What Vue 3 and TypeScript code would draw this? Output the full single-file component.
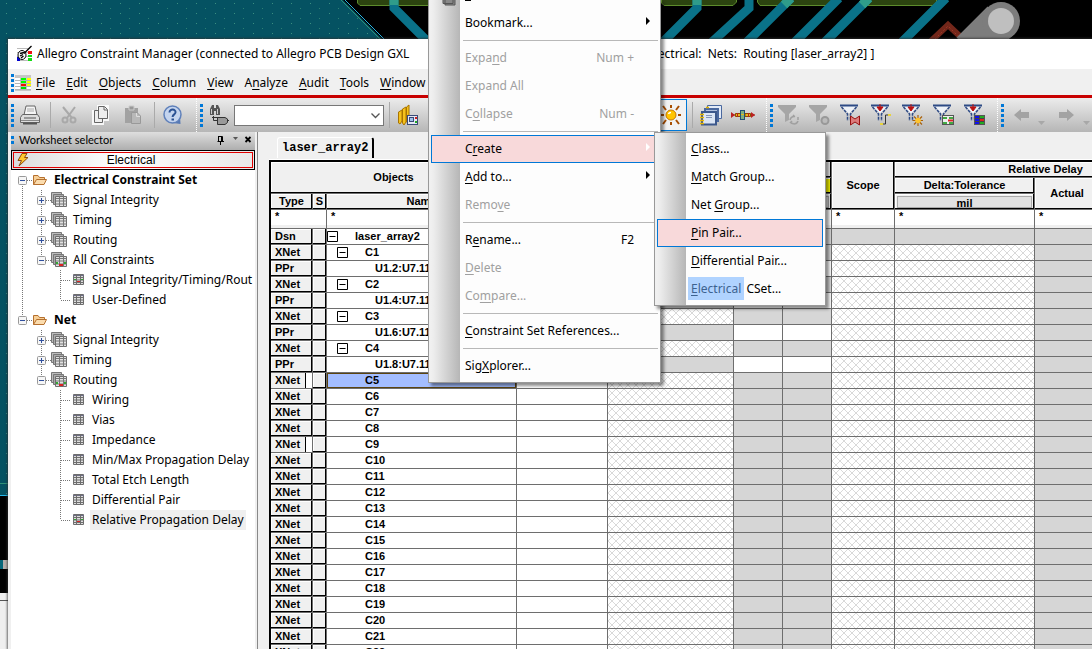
<script setup lang="ts">
type Guide = 'none' | 'line' | 'tee' | 'end'
interface TreeRow {
  label: string
  level: number
  guides: Guide[]
  toggle?: '+' | '-'
  marked?: boolean
  active?: boolean
}
interface MenuItem {
  parts?: [string, string, string]
  shortcut?: string
  arrow?: boolean
  disabled?: boolean
  hot?: boolean
  sep?: boolean
}
interface GridRow {
  type: string
  name: string
  depth: number
  open?: boolean
  narrow?: boolean
  selected?: boolean
}

const menus: [string, string, string][] = [
  ['', 'F', 'ile'],
  ['', 'E', 'dit'],
  ['', 'O', 'bjects'],
  ['', 'C', 'olumn'],
  ['', 'V', 'iew'],
  ['A', 'n', 'alyze'],
  ['', 'A', 'udit'],
  ['', 'T', 'ools'],
  ['', 'W', 'indow'],
]

const tree: TreeRow[] = [
  { label: 'Electrical Constraint Set', level: 0, guides: ['none'], toggle: '-' },
  { label: 'Signal Integrity', level: 1, guides: ['line', 'tee'], toggle: '+' },
  { label: 'Timing', level: 1, guides: ['line', 'tee'], toggle: '+' },
  { label: 'Routing', level: 1, guides: ['line', 'tee'], toggle: '+' },
  { label: 'All Constraints', level: 1, guides: ['line', 'end'], toggle: '-', marked: true },
  { label: 'Signal Integrity/Timing/Rout', level: 2, guides: ['line', 'none', 'tee'], marked: true },
  { label: 'User-Defined', level: 2, guides: ['line', 'none', 'end'] },
  { label: 'Net', level: 0, guides: ['end'], toggle: '-' },
  { label: 'Signal Integrity', level: 1, guides: ['none', 'tee'], toggle: '+' },
  { label: 'Timing', level: 1, guides: ['none', 'tee'], toggle: '+' },
  { label: 'Routing', level: 1, guides: ['none', 'end'], toggle: '-', marked: true },
  { label: 'Wiring', level: 2, guides: ['none', 'none', 'tee'] },
  { label: 'Vias', level: 2, guides: ['none', 'none', 'tee'] },
  { label: 'Impedance', level: 2, guides: ['none', 'none', 'tee'] },
  { label: 'Min/Max Propagation Delay', level: 2, guides: ['none', 'none', 'tee'] },
  { label: 'Total Etch Length', level: 2, guides: ['none', 'none', 'tee'] },
  { label: 'Differential Pair', level: 2, guides: ['none', 'none', 'tee'] },
  { label: 'Relative Propagation Delay', level: 2, guides: ['none', 'none', 'end'], marked: true, active: true },
]

function guidePath(row: TreeRow, index: number): string {
  const g = row.guides[index]
  const last = index === row.guides.length - 1
  let d = ''
  if (g === 'line' || g === 'tee') d += 'M9.5 0V20'
  if (g === 'end') d += 'M9.5 0V10'
  if (last && row.level === 0 && row.label !== 'Net') d += 'M9.5 10V20'
  if (last) d += 'M10 10.5H19'
  return d
}

const contextMenu: MenuItem[] = [
  { parts: ['', '', 'Bookmark...'], arrow: true },
  { sep: true },
  { parts: ['Expa', 'n', 'd'], shortcut: 'Num +', disabled: true },
  { parts: ['', '', 'Expand All'], disabled: true },
  { parts: ['C', 'o', 'llapse'], shortcut: 'Num -', disabled: true },
  { sep: true },
  { parts: ['C', 'r', 'eate'], arrow: true, hot: true },
  { parts: ['', 'A', 'dd to...'], arrow: true },
  { parts: ['Remo', 'v', 'e'], disabled: true },
  { sep: true },
  { parts: ['R', 'e', 'name...'], shortcut: 'F2' },
  { parts: ['', 'D', 'elete'], disabled: true },
  { parts: ['Co', 'm', 'pare...'], disabled: true },
  { sep: true },
  { parts: ['', 'C', 'onstraint Set References...'] },
  { sep: true },
  { parts: ['Sig', 'X', 'plorer...'] },
]

const rows: GridRow[] = [{ type: 'Dsn', name: 'laser_array2', depth: 0, open: true }]
for (let i = 1; i <= 4; i++) {
  rows.push({ type: 'XNet', name: `C${i}`, depth: 1, open: true })
  rows.push({ type: 'PPr', name: `U1.${i * 2}:U7.11`, depth: 2 })
}
for (let i = 5; i <= 22; i++) {
  rows.push({ type: 'XNet', name: `C${i}`, depth: 1, narrow: i === 5 || i === 9, selected: i === 5 })
}

function fills(row: GridRow): string[] {
  if (row.type === 'Dsn') return ['', 'gray', 'gray', 'gray', 'gray', 'gray', 'gray', 'gray']
  if (row.type === 'PPr') return ['', 'gray', '', '', 'hatch', 'hatch', 'gray', 'gray']
  return ['', 'hatch', 'gray', 'gray', 'hatch', 'hatch', 'gray', 'gray']
}

const filters = ['refresh', 'cancel', 'bow', 'step', 'spark', 'table', 'list']
</script>

<template>
  <div class="desktop">
    <svg class="board" viewBox="0 0 1092 649" width="1092" height="649" aria-hidden="true">
      <defs>
        <pattern id="dots" width="19" height="10" patternUnits="userSpaceOnUse">
          <rect x="6" y="3" width="1" height="1" fill="#3a8f80" />
          <rect x="15" y="8" width="1" height="1" fill="#2d8074" />
        </pattern>
      </defs>
      <rect width="1092" height="649" fill="#000" />
      <path d="M0 0H343L382 39V495H0Z" fill="#055262" />
      <path d="M0 0H343L382 39V495H0Z" fill="url(#dots)" />
      <path d="M341 0L380 39" stroke="#2f9078" fill="none" />
      <path d="M345 0L384 39M0 495.500H8" stroke="#25b5e8" fill="none" />
      <path d="M0 483.500H8" stroke="#2f9078" />
      <g fill="#2c4410" stroke="#5d8c2c">
        <path d="M357.500 -2V3L360 5.500H440V-2Z" />
        <path d="M661.500 -2V3L664 5.500H733L736.500 2V-2Z" />
        <path d="M757.500 -2V2L760 5.500H829L832.500 2V-2Z" />
        <path d="M861.500 -2V2L864 5.500H933L936.500 2V-2Z" />
      </g>
      <g fill="none" stroke="#0a7289" stroke-width="9">
        <path d="M394 -2V8L428 42" />
        <path d="M697 -2V8L663 42M749 -2V8L712 42M791 -2L747 42M839 -2L795 42M869 -2L825 42M946 -2L902 42" />
      </g>
      <g fill="none" stroke="#2f9c8a" stroke-width="9">
        <path d="M394 -2V5M697 -2V5M791 -2L784 5M869 -2L862 5" />
      </g>
      <path d="M930 42L948 25L966 42" fill="none" stroke="#73271a" stroke-width="6" />
      <path d="M932 42L948 26L964 42" fill="none" stroke="#a03526" stroke-dasharray="2 2" />
      <path d="M1001 20L970 51" stroke="#7d7d7d" stroke-width="38" />
      <circle cx="1001" cy="21" r="19" fill="#7d7d7d" />
      <circle cx="1001" cy="21" r="13" fill="#bfbfbf" />
      <rect y="560" width="3" height="9" fill="#08677a" />
      <rect x="3" y="560" width="5" height="9" fill="#b5aeab" />
      <rect y="593" width="8" height="56" fill="#efefef" />
      <path d="M0 600.500H8" stroke="#555" />
    </svg>

    <main class="window">
      <header class="titlebar">
        <svg width="18" height="18" viewBox="0 0 18 18" aria-hidden="true">
          <path d="M1 3.500H12M1 7.500H12M1 11.500H12M1 15.500H16" stroke="#bbb" />
          <path d="M12 6h4v3h-4z" fill="#e11" /><path d="M12 10h4v2h-4zM12 13h4v3h-4z" fill="#1d1" />
          <path d="M1 12h3v4h-3z" fill="#00c" />
          <ellipse cx="6" cy="10" rx="4" ry="4.500" fill="#fff" stroke="#000" />
          <path d="M15.500 1L8 8.500M4 8.500L8 7.500M4 11L7 9.500M5 13L7.500 11" stroke="#000" stroke-width="1.300" fill="none" />
        </svg>
        <span class="title-main">Allegro Constraint Manager (connected to Allegro PCB Design GXL</span>
        <span class="title-doc">Electrical:&nbsp; Nets:&nbsp; Routing [laser_array2] ]</span>
      </header>

      <nav class="menubar" aria-label="Main menu">
        <span class="grip small"></span>
        <svg class="sheet-icon" width="16" height="16" viewBox="0 0 16 16" aria-hidden="true">
          <rect width="16" height="16" fill="#c6c6c6" />
          <path d="M0 3h5v12H0z" fill="#fff" />
          <path d="M6 3h5v6H6z" fill="#0f0" /><path d="M12 3h4v9h-4z" fill="#ff0" />
          <path d="M6 9h5v3H6z" fill="#e10" /><path d="M6 12h5v3H6z" fill="#0d0" /><path d="M12 12h4v3h-4z" fill="#fff" />
          <path d="M0 5.500H16M0 8.500H16M0 11.500H16M0 14.500H16" stroke="#b5b5b5" />
        </svg>
        <button v-for="m in menus" :key="m[1] + m[2]" type="button">{{ m[0] }}<u>{{ m[1] }}</u>{{ m[2] }}</button>
      </nav>

      <div class="toolbar" role="toolbar" aria-label="Tools">
        <span class="grip"></span>
        <button class="tool" type="button" aria-label="Print">
          <svg width="22" height="22" viewBox="0 0 22 22">
            <path d="M5 11L7 2H16L18 11Z" fill="#f5f5f5" stroke="#666" />
            <path d="M8 5H15M8 7H15" stroke="#aaa" />
            <path d="M3.500 10.500H18.500L20.500 13.500V18.500H1.500V13.500Z" fill="#ddd" stroke="#666" />
            <path d="M2 16.500H20" stroke="#888" /><path d="M4 19.500H18" stroke="#555" stroke-width="2" />
            <path d="M5 14H17" stroke="#999" stroke-width="2" />
          </svg>
        </button>
        <span class="sep"></span>
        <button class="tool wide" type="button" aria-label="Cut">
          <svg width="18" height="20" viewBox="0 0 18 20" fill="none" stroke="#a9a9a9">
            <path d="M3 2L12 13M15 2L7 13" stroke-width="2" /><circle cx="5" cy="15" r="2.500" stroke-width="2" /><circle cx="13" cy="15" r="2.500" stroke-width="2" />
          </svg>
        </button>
        <button class="tool wide" type="button" aria-label="Copy">
          <svg width="18" height="20" viewBox="0 0 18 20">
            <path d="M0 5H5V0H17V16H12V20H0Z" fill="#fff" opacity=".85" />
            <path d="M2.500 5.500H10.500V17.500H2.500Z" fill="#eee" stroke="#666" />
            <path d="M6.500 1.500H12.500L15.500 4.500V13.500H6.500Z" fill="#eee" stroke="#666" /><path d="M12 2V5H15" stroke="#666" fill="none" />
          </svg>
        </button>
        <button class="tool wide" type="button" aria-label="Paste">
          <svg width="18" height="20" viewBox="0 0 18 20">
            <path d="M1 3H14V18H1Z" fill="#a2a2a2" /><path d="M5 1H10V5H5Z" fill="#999" stroke="#ccc" />
            <path d="M7.500 7.500H13L16.500 11V18.500H7.500Z" fill="#b8b8b8" stroke="#999" /><path d="M12.500 8V11.500H16" stroke="#ddd" fill="none" />
          </svg>
        </button>
        <span class="sep"></span>
        <button class="tool wide" type="button" aria-label="Help">
          <svg width="20" height="20" viewBox="0 0 20 20">
            <path d="M17 11L17.500 19L10 18Z" fill="#5679b4" />
            <circle cx="9.500" cy="9.500" r="8.500" fill="#c4d4ee" stroke="#5f80ba" stroke-width="1.500" />
            <path d="M6.500 7.500C6.500 3.500 13 3.800 12.500 7.500C12.300 9.500 9.600 9.300 9.600 12" fill="none" stroke="#2b5294" stroke-width="2" />
            <path d="M8.500 13.500H11V15.500H8.500Z" fill="#2b5294" />
          </svg>
        </button>
        <span class="end"></span>
        <span class="grip"></span>
        <button class="tool" type="button" aria-label="Find">
          <svg width="20" height="22" viewBox="0 0 20 22">
            <path d="M1 11V5L3 1H5V4H7V1H9L11 5V11H7V7H5V11Z" fill="#555" /><path d="M2.500 5V10M8.500 5V10" stroke="#ccc" />
            <path d="M4.500 12V16.500H8M3 13.500H9M18 16.500H20" stroke="#333" fill="none" />
            <path d="M8.500 13.500H16L18.500 15V18.500L16 20.500H8.500Z" fill="#999" stroke="#333" />
          </svg>
        </button>
        <span class="combo">
          <select aria-label="Find object"><option></option></select>
          <svg width="9" height="6" viewBox="0 0 9 6" aria-hidden="true"><path d="M.5 .5L4.500 4.500L8.500 .5" fill="none" stroke="#555" stroke-width="1.300" /></svg>
        </span>
        <span class="sep"></span>
        <button class="tool wide" type="button" aria-label="Properties">
          <svg width="22" height="22" viewBox="0 0 22 22">
            <path d="M1.500 19V8L5 6V17L3 20ZM5.500 19V5L9 3V18L7 21ZM9.500 18V3L12 1V17Z" fill="#f6c21c" stroke="#a87400" />
            <rect x="10.500" y="11.500" width="10" height="9" fill="#e5e9f5" stroke="#3b4a78" /><rect x="12.500" y="13.500" width="4" height="4" fill="#9fc0e8" stroke="#3b4a78" />
            <path d="M18 13h2v2h-2z" fill="#c22" /><path d="M18 17h2v2h-2z" fill="#2a2" />
          </svg>
        </button>
        <span class="covered"></span>
        <button class="tool wide pressed" type="button" aria-label="Highlight">
          <svg width="24" height="24" viewBox="0 0 24 24">
            <path d="M12 2V5M12 19V22M2 12H5M19 12H22M4 3L7 7M20 3L17 7M4 21L7 17M20 21L17 17" stroke="#a84e00" stroke-width="2" />
            <circle cx="12" cy="12" r="5" fill="#ffc400" stroke="#c87800" /><path d="M9.500 11Q10 9.500 12 9.500" stroke="#fff" fill="none" stroke-width="1.500" />
          </svg>
        </button>
        <span class="sep"></span>
        <button class="tool wide" type="button" aria-label="Worksheets">
          <svg width="22" height="22" viewBox="0 0 22 22">
            <path d="M7.500 1.500H21.500V14.500H7.500Z" fill="#e3ebf8" stroke="#4a689e" /><path d="M15 4.500H19M15 6.500H19" stroke="#89a" />
            <path d="M5 5H18V17H5Z" fill="#aebfdd" stroke="#4a689e" stroke-width="2" />
            <path d="M2 8H16V20.500H2Z" fill="#dbe5f4" stroke="#3c588c" stroke-width="2" /><path d="M6 11.500H12M6 13.500H12" stroke="#8394b5" />
            <path d="M0 10.500H4M0 13.500H4M0 16.500H4M0 19.500H4M6 3.500H9" stroke="#e5b400" stroke-width="1.500" />
          </svg>
        </button>
        <button class="tool wide" type="button" aria-label="Net topology">
          <svg width="24" height="12" viewBox="0 0 24 12">
            <path d="M0 6H24" stroke="#a32414" stroke-width="1" /><path d="M0 3L4 6L0 9ZM20 3L24 6L20 9Z" fill="#b22" />
            <path d="M4.500 4.500H10V7.500H4.500ZM14 4.500H19.500V7.500H14Z" fill="#e4b71d" stroke="#8c4b00" /><path d="M6.500 4V8M17.500 4V8" stroke="#b22" />
            <rect x="9.500" y="1.500" width="4" height="9" fill="#7fb07f" stroke="#234f73" /><path d="M10 5.500H13" stroke="#e4b71d" />
          </svg>
        </button>
        <span class="end"></span>
        <span class="grip"></span>
        <button v-for="f in filters" :key="f" class="tool" type="button" :aria-label="'Filter ' + f">
          <svg width="22" height="22" viewBox="1 0 22 22">
            <path v-if="f === 'refresh' || f === 'cancel'" d="M1 1H19V3L12 10V16L8 18V10L1 3Z" fill="#a6a6a6" />
            <template v-else>
              <path d="M3 2H17L11 9H9Z" fill="#eef2f8" />
              <path d="M1 1.500H19" stroke="#2d4a85" stroke-width="2" />
              <path d="M2.500 3L8.500 10V17M17.500 3L11.500 10V17" fill="none" stroke="#2d4a85" stroke-width="1.500" stroke-dasharray="3 1" />
            </template>
            <path v-if="f === 'refresh'" d="M13 16Q14 12 18 12.500M21 13V16M14 19L17 20M21 17Q20 20 17 20M16 11L18 13M15 17L13 19" fill="none" stroke="#a0a0a0" stroke-width="1.500" />
            <circle v-if="f === 'cancel'" cx="17" cy="16.500" r="3.500" fill="#bbb" stroke="#999" stroke-width="2" />
            <path v-if="f === 'bow'" d="M11.500 12L16 15L20.500 12V21L16 18L11.500 21Z" fill="#dd7c7c" stroke="#911" />
            <path v-if="f === 'step' || f === 'spark' || f === 'list'" d="M10 0V6M7 3H13L10 7Z" fill="#b11" stroke="#b11" />
            <g v-if="f === 'step'"><path d="M11 20H15.500V11H20" fill="none" stroke="#333" /><path d="M10 19h3v2h-3zM18 10h3v2h-3z" fill="#e8d33c" /></g>
            <g v-if="f === 'spark'"><path d="M17 11V22M11.500 16.500H22M13 12.500L21 20.500M21 12.500L13 20.500" stroke="#a8600c" stroke-width="1.200" /><circle cx="17" cy="16.500" r="2.800" fill="#ffc52e" /></g>
            <g v-if="f === 'table'">
              <rect x="10.500" y="11.500" width="11" height="9" fill="#eee" stroke="#555" />
              <path d="M11 14H15M11 19H15M17 14H21M17 19H21" stroke="#4a4" stroke-width="2" /><path d="M16 16.500H21" stroke="#d22" stroke-width="2" />
            </g>
            <g v-if="f === 'list'">
              <rect x="11.500" y="11.500" width="10" height="9" fill="#444" stroke="#555" />
              <path d="M12 13H16M12 16H16M12 19H16" stroke="#11e" stroke-width="2" /><path d="M17 13H21M17 19H21" stroke="#2a2" stroke-width="2" /><path d="M17 16H21" stroke="#d22" stroke-width="2" />
            </g>
          </svg>
        </button>
        <span class="end"></span>
        <span class="grip"></span>
        <button class="tool nav" type="button" aria-label="Back" disabled>
          <svg width="32" height="20" viewBox="0 0 32 20"><path d="M0 10L7 4V7H15V13H7V16Z" fill="#a3a3a3" /><path d="M24 16H31L27.500 20Z" fill="#a8a8a8" /></svg>
        </button>
        <button class="tool nav" type="button" aria-label="Forward" disabled>
          <svg width="32" height="20" viewBox="0 0 32 20"><path d="M15 10L8 4V7H0V13H8V16Z" fill="#a3a3a3" /><path d="M24 16H31L27.500 20Z" fill="#a8a8a8" /></svg>
        </button>
      </div>

      <div class="body">
        <aside class="side">
          <header class="side-head">
            <span class="mini-grip"></span>
            <h2>Worksheet selector</h2>
            <svg width="38" height="10" viewBox="0 0 38 10" aria-hidden="true">
              <path d="M.500 6.500H7M1.500 1.500H5.500V6M1.500 1V6M4.500 1V6M3.500 7V10" stroke="#000" fill="none" />
              <path d="M16 2H21L18.500 5Z" fill="#555" /><path d="M28.500 2L33.500 7M33.500 2L28.500 7" stroke="#000" stroke-width="1.800" />
            </svg>
          </header>
          <button class="electrical" type="button">
            <svg width="12" height="14" viewBox="0 0 12 14" aria-hidden="true"><path d="M5 .5H10L7.500 4.500H11L2 13L4.500 7.500H1Z" fill="#ffc62e" stroke="#8c4a10" /></svg>
            <span>Electrical</span>
          </button>
          <ul class="tree">
            <li v-for="(row, i) in tree" :key="i" :class="'level' + row.level">
              <span v-for="(g, k) in row.guides" :key="k" class="guide">
                <svg width="19" height="20" viewBox="0 0 19 20" aria-hidden="true">
                  <path :d="guidePath(row, k)" stroke="#777" stroke-dasharray="1 1" fill="none" />
                  <template v-if="row.toggle && k === row.guides.length - 1">
                    <rect x="5.500" y="6.500" width="8" height="8" rx="1" fill="#f6f6f6" stroke="#999" />
                    <path d="M7 10.500H12" stroke="#2f4f9d" />
                    <path v-if="row.toggle === '+'" d="M9.500 8V13" stroke="#2f4f9d" />
                  </template>
                </svg>
              </span>
              <svg v-if="row.level === 0" class="ico" width="17" height="14" viewBox="0 0 17 14" aria-hidden="true">
                <path d="M1.500 11.500V2.500H6L7.500 4.500H12.500V6" fill="#f7cf96" stroke="#b5702e" />
                <path d="M1.500 11.500L4.500 6.500H14.500L12 11.500Z" fill="#fbdcae" stroke="#b5702e" />
              </svg>
              <svg v-else-if="row.level === 1" class="ico" width="17" height="16" viewBox="0 0 17 16" aria-hidden="true">
                <path d="M.5 .5h10v10h-10z" fill="#bbb" stroke="#777" /><path d="M2.500 2.500h10v10h-10z" fill="#aaa" stroke="#777" />
                <path d="M4.500 4.500h11v10h-11z" fill="#e2e2e2" stroke="#6e6e6e" />
                <path d="M5 6.500H16M5 9H16M5 12H16M8.500 4V15M12.500 4V15" stroke="#777" />
                <path v-if="row.marked" d="M8 12h4v2H8z" fill="#d22" /><path v-if="row.marked" d="M5 10h2v2H5zM13 10h2v2h-2z" fill="#3a3" />
              </svg>
              <svg v-else class="ico leaf" width="11" height="12" viewBox="0 0 11 12" aria-hidden="true">
                <path d="M.5 .5h10v10H.5z" fill="#ddd" stroke="#6e6e6e" />
                <path d="M0 1.500H11" stroke="#6e6e86" /><path d="M0 3.500H11M0 6H11M0 8.500H11M3.500 0V11M7.500 0V11" stroke="#6e6e6e" />
                <path v-if="row.marked" d="M4 7h3v1H4z" fill="#d22" /><path v-if="row.marked" d="M1 5h2v1H1zM8 5h2v1H8z" fill="#3a3" />
              </svg>
              <a href="#" :class="{ active: row.active }">{{ row.label }}</a>
            </li>
          </ul>
        </aside>

        <section class="sheet">
          <div class="tabs"><button type="button" class="tab">laser_array2</button></div>
          <div class="frame">
            <table>
              <colgroup>
                <col class="c-type" /><col class="c-s" /><col class="c-name" /><col class="c-ref" /><col class="c-pair" />
                <col class="c-pin" /><col class="c-pin" /><col class="c-scope" /><col class="c-delta" /><col class="c-actual" /><col class="c-margin" />
              </colgroup>
              <thead>
                <tr>
                  <th colspan="3" rowspan="2">Objects</th>
                  <th rowspan="3"></th><th rowspan="3"></th>
                  <th colspan="2"></th>
                  <th rowspan="3">Scope</th>
                  <th colspan="3">Relative Delay</th>
                </tr>
                <tr>
                  <th colspan="2" class="yellow"></th>
                  <th>Delta:Tolerance</th>
                  <th rowspan="2">Actual</th><th rowspan="2"></th>
                </tr>
                <tr>
                  <th>Type</th><th>S</th><th>Name</th>
                  <th colspan="2"><span class="unit"></span></th>
                  <th><span class="unit">mil</span></th>
                </tr>
                <tr class="filter">
                  <td colspan="2">*</td><td>*</td>
                  <td></td><td></td><td></td><td></td>
                  <td>*</td><td>*</td><td>*</td><td></td>
                </tr>
              </thead>
              <tbody>
                <tr v-for="row in rows" :key="row.name">
                  <td class="head type" :class="{ narrow: row.narrow }"><span>{{ row.type }}</span></td>
                  <td class="head"></td>
                  <td :class="['name', 'depth' + row.depth, { selected: row.selected }]">
                    <div>
                      <span class="box"><svg v-if="row.open" width="11" height="11" viewBox="0 0 11 11"><path d="M.5 .5h10v10H.5zM2.500 5.500h6" fill="none" stroke="#000" /></svg></span>
                      <span>{{ row.name }}</span>
                    </div>
                  </td>
                  <td v-for="(f, n) in fills(row)" :key="n" :class="f"></td>
                </tr>
              </tbody>
            </table>
          </div>
        </section>
      </div>
    </main>

    <div class="popup context" role="menu">
      <div class="partial">
        <svg width="50" height="8" viewBox="0 0 50 8" aria-hidden="true">
          <path d="M12 0V3.500H22V0M14 0V5H24V0" fill="#888" stroke="#555" /><path d="M34 .5H40" stroke="#000" />
        </svg>
      </div>
      <template v-for="(item, i) in contextMenu" :key="i">
        <hr v-if="item.sep" />
        <button v-else type="button" role="menuitem" :disabled="item.disabled" :class="{ hot: item.hot }">
          <span v-if="item.parts">{{ item.parts[0] }}<u>{{ item.parts[1] }}</u>{{ item.parts[2] }}</span>
          <span v-if="item.shortcut" class="shortcut">{{ item.shortcut }}</span>
          <svg v-if="item.arrow" class="arrow" width="4" height="8" viewBox="0 0 4 8"><path d="M0 0L4 4L0 8Z" fill="currentColor" /></svg>
        </button>
      </template>
    </div>

    <div class="popup submenu" role="menu">
      <button type="button" role="menuitem"><span><u>C</u>lass...</span></button>
      <button type="button" role="menuitem"><span><u>M</u>atch Group...</span></button>
      <button type="button" role="menuitem"><span>Net <u>G</u>roup...</span></button>
      <button type="button" role="menuitem" class="hot"><span><u>P</u>in Pair...</span></button>
      <button type="button" role="menuitem"><span><u>D</u>ifferential Pair...</span></button>
      <button type="button" role="menuitem"><span><mark><u>E</u>lectrical</mark> CSet...</span></button>
    </div>
  </div>
</template>

<style>
html,
body {
  margin: 0;
  overflow: hidden;
}
</style>

<style scoped>
.desktop {
  position: relative;
  box-sizing: border-box;
  height: 100vh;
  padding: 39px 0 0 8px;
  overflow: hidden;
  background: #000;
  color: #000;
  font: 12px/20px "Noto Sans", "Open Sans", sans-serif;
}
.board {
  position: absolute;
  top: 0;
  left: 0;
}
button,
select {
  margin: 0;
  padding: 0;
  border: 0;
  background: none;
  color: inherit;
  font: inherit;
}
u {
  text-underline-offset: 2px;
}
.window {
  position: relative;
  display: flex;
  flex-direction: column;
  height: 100%;
  background: #f0f0f0;
  box-shadow: 0 0 2px 1px rgba(50, 50, 50, 0.7);
}
.titlebar {
  display: flex;
  flex: none;
  align-items: center;
  height: 30px;
  padding-left: 8px;
  background: #fff;
  white-space: pre;
}
.titlebar svg {
  margin-right: 3px;
}
.title-main {
  flex: 0 0 611px;
}
.menubar {
  display: flex;
  flex: none;
  align-items: center;
  gap: 11px;
  box-sizing: border-box;
  height: 29px;
  padding-top: 2px;
  border-bottom: 3px solid #c80000;
}
.grip {
  flex: none;
  width: 3px;
  height: 23px;
  margin-left: 3px;
  background: repeating-linear-gradient(#0078d7 0 3px, transparent 3px 5px);
}
.grip.small {
  height: 18px;
  margin-right: -10px;
}
.sheet-icon {
  margin-right: -6px;
}
.toolbar {
  display: flex;
  flex: none;
  align-items: center;
  height: 34px;
  background: linear-gradient(#ececec, #b6b6b6);
}
.tool {
  display: flex;
  flex: none;
  align-items: center;
  justify-content: center;
  width: 31px;
  height: 32px;
}
.tool.wide {
  width: 32px;
}
.tool.nav {
  justify-content: flex-end;
  width: 45px;
  padding-right: 3px;
  box-sizing: border-box;
}
.tool.pressed {
  box-sizing: border-box;
  border: 1px solid #0078d7;
  background: #f2f2f2;
}
.sep,
.end {
  flex: none;
  box-sizing: border-box;
  width: 8px;
  height: 26px;
}
.sep {
  background: linear-gradient(#aaa, #aaa) 5px 0 / 1px 100% no-repeat;
}
.end {
  height: 34px;
  border-right: 1px dotted #fff;
}
.combo {
  position: relative;
  flex: none;
  width: 150px;
  height: 21px;
}
.combo select {
  display: block;
  width: 100%;
  height: 100%;
  appearance: none;
  border: 1px solid #777;
  background: #fff;
}
.combo svg {
  position: absolute;
  top: 8px;
  right: 4px;
  pointer-events: none;
}
.covered {
  flex: 0 0 231px;
}
.body {
  display: flex;
  flex: 1;
  min-height: 0;
}
.side {
  display: flex;
  flex: none;
  flex-direction: column;
  box-sizing: border-box;
  width: 250px;
  padding: 0 2px 0 3px;
  border-right: 1px solid #888;
  overflow: hidden;
}
.side-head {
  display: flex;
  flex: none;
  align-items: center;
  gap: 5px;
  box-sizing: border-box;
  height: 18px;
  padding-bottom: 2px;
  background: linear-gradient(#dedede, #aeaeae);
}
.mini-grip {
  width: 3px;
  height: 8px;
  background: repeating-linear-gradient(#0078d7 0 3px, transparent 3px 5px);
}
.side-head h2 {
  flex: 1;
  margin: 0;
  font: 11px/16px Lato, "Noto Sans", sans-serif;
}
.electrical {
  display: flex;
  flex: none;
  align-items: center;
  box-sizing: border-box;
  height: 20px;
  padding: 0 5px;
  border: 1px solid #000;
  outline: 1px solid #e00000;
  outline-offset: -3px;
  background: linear-gradient(90deg, #dcdcdc, #fff 45%, #e8e8e8);
  font: 12px/16px "Liberation Sans", Arial, sans-serif;
}
.electrical span {
  flex: 1;
  padding-right: 16px;
  text-align: center;
}
.tree {
  flex: 1;
  margin: 0;
  padding: 0 0 0 2px;
  overflow: hidden;
  background: #fff;
  list-style: none;
}
.tree li {
  display: flex;
  align-items: center;
  height: 20px;
  white-space: nowrap;
}
.guide,
.guide svg {
  display: block;
  flex: none;
  width: 19px;
  height: 20px;
}
.ico {
  flex: none;
}
.leaf {
  margin: 0 3px;
}
.tree a {
  padding: 0 5px;
  color: #000;
  text-decoration: none;
}
.tree .level2 a {
  padding: 0 2px;
  margin-left: 3px;
}
.level0 a {
  font-weight: 700;
}
.tree a.active {
  background: #efefef;
}
.sheet {
  display: flex;
  flex: 1;
  flex-direction: column;
  min-width: 0;
  padding: 5px 0 0 11px;
}
.tabs {
  flex: none;
  height: 22px;
  padding-left: 8px;
  border-bottom: 1px solid #fff;
}
.tab {
  height: 21px;
  padding: 0 4px;
  border-top: 1px solid #fff;
  border-left: 1px solid #fff;
  border-right: 2px solid #000;
  border-radius: 3px 3px 0 0;
  font: bold 12px/18px "Liberation Mono", "Courier New", monospace;
}
.frame {
  flex: 1;
  overflow: hidden;
  border-top: 2px solid #000;
  border-left: 2px solid #000;
  background: #fff;
}
table {
  width: 926px;
  table-layout: fixed;
  border-collapse: separate;
  border-spacing: 0;
  font: bold 11px/14px "Liberation Sans", Arial, sans-serif;
}
.c-type { width: 42px; }
.c-s { width: 14px; }
.c-name { width: 190px; }
.c-ref { width: 91px; }
.c-pair { width: 126px; }
.c-pin { width: 49px; }
.c-scope { width: 63px; }
.c-delta { width: 140px; }
.c-actual { width: 65px; }
.c-margin { width: 97px; }
th,
td {
  box-sizing: border-box;
  height: 16px;
  padding: 0 0 1px;
  overflow: hidden;
  border-right: 1px solid #6e6e6e;
  border-bottom: 1px solid #6e6e6e;
}
td {
  vertical-align: top;
}
th,
td.head {
  background: #f0f0f0;
  box-shadow: inset -1px -1px 0 #000, inset 1px 1px 0 #fff;
}
th.yellow {
  background: #ff0;
}
.unit {
  display: block;
  box-sizing: border-box;
  height: 12px;
  margin: 1px 2px 0;
  border: 1px solid #aaa;
  background: #e1e1e1;
  line-height: 12px;
}
.filter td {
  height: 19px;
  padding-left: 4px;
  background: linear-gradient(#fff 15px, #f0f0f0 15px);
  line-height: 12px;
}
td.type {
  padding-left: 4px;
}
td.type.narrow {
  background: linear-gradient(90deg, #f0f0f0 34px, #000 34px 35px, #fff 35px);
  box-shadow: none;
}
.name div {
  display: flex;
  align-items: center;
  height: 14px;
}
.name .box {
  display: flex;
  flex: none;
  width: 28px;
}
.depth1 div {
  padding-left: 10px;
}
.depth2 div {
  padding-left: 20px;
}
.selected {
  background: #a3bdff;
  box-shadow: inset 0 0 0 1px #5a4310;
}
.gray {
  background: #d6d6d6;
}
.hatch {
  background: #fff url("data:image/svg+xml,%3Csvg xmlns='http://www.w3.org/2000/svg' width='8' height='8'%3E%3Cpath d='M0 0L8 8M8 0L0 8' stroke='%23d9d9d9' shape-rendering='crispEdges'/%3E%3C/svg%3E");
}
.popup {
  position: absolute;
  box-sizing: border-box;
  border: 1px solid #999;
  background: linear-gradient(90deg, #f0f0f0 2px, #ececec 5px, #b6b6b6 31px, #fdfdfd 31px);
  box-shadow: 3px 3px 3px rgba(0, 0, 0, 0.45);
}
.context {
  top: 0;
  left: 428px;
  width: 233px;
  padding: 0 2px 2px;
  border-top: 0;
}
.submenu {
  top: 132px;
  left: 654px;
  width: 172px;
  padding: 2px;
}
.partial {
  height: 9px;
}
.partial svg {
  display: block;
}
.popup hr {
  height: 1px;
  margin: 3px 0 3px 32px;
  border: 0;
  background: #b8b8b8;
}
.popup button {
  display: flex;
  align-items: center;
  box-sizing: border-box;
  width: 100%;
  height: 28px;
  padding: 0 5px 0 33px;
  border: 1px solid transparent;
  text-align: left;
  white-space: nowrap;
}
.popup button:disabled {
  color: #a0a0a0;
}
.popup .hot {
  border-color: #0078d7;
  background: #f8d9da;
}
.hot .arrow {
  color: #fff;
}
.shortcut {
  margin-left: auto;
  padding-right: 18px;
}
.arrow {
  margin: 0 2px 4px auto;
}
mark {
  margin-left: -3px;
  padding: 3px;
  margin-right: -1px;
  background: #b0d3ff;
  color: #3d628f;
}
</style>
